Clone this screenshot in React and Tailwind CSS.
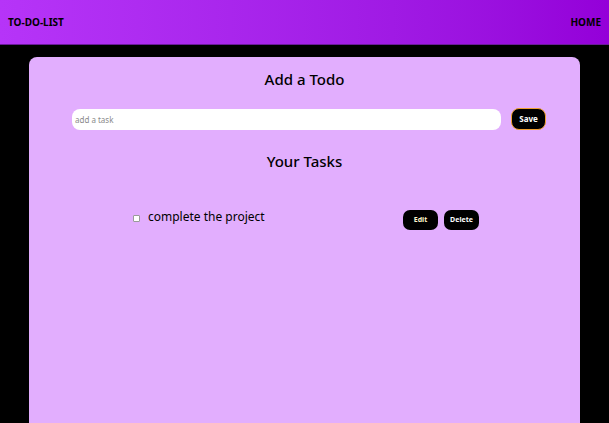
import React, { useState } from "react";

export default function App() {
  const [todos] = useState([{ id: 1, text: "complete the project", done: false }]);

  return (
    <div className="min-h-screen bg-black font-['Noto_Sans',sans-serif]">
      <nav className="h-[45px] flex items-center justify-between px-[8px] bg-gradient-to-r from-[#b634f8] to-[#9400d9] border-b border-[#6b1a9a]">
        <span className="text-[10px] font-bold text-black">TO-DO-LIST</span>
        <span className="text-[10px] font-bold text-black">HOME</span>
      </nav>

      <main className="mx-[29px] mt-[12px] min-h-[366px] rounded-t-[8px] bg-[#e2aefe] pt-[10px]">
        <h2 className="text-center text-[15px] font-medium text-black leading-[24px]">Add a Todo</h2>
        <div className="mt-[17px] flex items-center gap-[10px] pl-[43px] pr-[34px]">
          <input
            type="text"
            placeholder="add a task"
            className="h-[21px] flex-1 rounded-[8px] bg-white px-[3px] text-[8px] outline-none placeholder:text-[#8a8a8a]"
          />
          <button className="h-[22px] w-[35px] rounded-[8px] border border-[#f0a030] bg-black text-[8px] font-bold text-white">
            Save
          </button>
        </div>

        <h2 className="mt-[19px] text-center text-[15px] font-medium text-black leading-[24px]">Your Tasks</h2>

        <div className="mt-[31px] pl-[104px] pr-[101px]">
          {todos.map((todo) => (
            <div key={todo.id} className="flex items-start justify-between">
              <div className="flex items-center gap-[8px] pt-[4px]">
                <span className="mt-[3px] h-[7px] w-[7px] rounded-[1px] border border-[#9a9a9a] bg-white" />
                <span className="text-[12px] text-black leading-[18px]">{todo.text}</span>
              </div>
              <div className="flex items-center gap-[6px] pt-[6px]">
                <button className="h-[20px] w-[35px] rounded-[7px] bg-black text-[7px] font-bold text-[#fff6cc]">
                  Edit
                </button>
                <button className="h-[20px] w-[35px] rounded-[7px] bg-black text-[7px] font-bold text-white">
                  Delete
                </button>
              </div>
            </div>
          ))}
        </div>
      </main>
    </div>
  );
}
